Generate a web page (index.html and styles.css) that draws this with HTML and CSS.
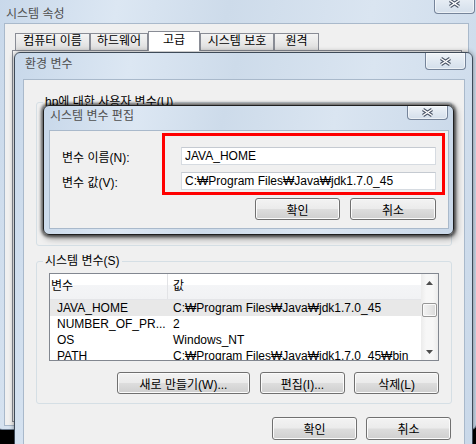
FILE: index.html
```html
<!DOCTYPE html>
<html lang="ko">
<head>
    <meta charset="UTF-8">
    <meta name="viewport" content="width=device-width, initial-scale=1.0">
    <title>시스템 속성</title>
    <link rel="stylesheet" href="styles.css">
</head>
<body>
<div class="desktop">

    <!-- 시스템 속성 -->
    <div class="window win-props">
        <div class="titlebar">
            <span class="title">시스템 속성</span>
            <span class="close-btn">
                <svg width="13" height="9" viewBox="0 0 13 9"><path d="M2 1.5L11 7.5M11 1.5L2 7.5" stroke="#4b5567" stroke-width="3.6"/><path d="M2 1.5L11 7.5M11 1.5L2 7.5" stroke="#fff" stroke-width="1.5"/></svg>
            </span>
        </div>
        <div class="client">
            <div class="tabs">
                <div class="tab tab-name">컴퓨터 이름</div>
                <div class="tab tab-hw">하드웨어</div>
                <div class="tab tab-adv selected">고급</div>
                <div class="tab tab-prot">시스템 보호</div>
                <div class="tab tab-remote">원격</div>
            </div>
            <div class="tab-page"></div>
        </div>
    </div>

    <!-- 환경 변수 -->
    <div class="window win-env">
        <div class="titlebar">
            <span class="title">환경 변수</span>
            <span class="close-btn">
                <svg width="13" height="9" viewBox="0 0 13 9"><path d="M2 1.5L11 7.5M11 1.5L2 7.5" stroke="#4b5567" stroke-width="3.6"/><path d="M2 1.5L11 7.5M11 1.5L2 7.5" stroke="#fff" stroke-width="1.5"/></svg>
            </span>
        </div>
        <div class="client">
            <fieldset class="group group-user">
                <legend>hp에 대한 사용자 변수(U)</legend>
            </fieldset>

            <fieldset class="group group-sys">
                <legend>시스템 변수(S)</legend>
                <div class="group-body">
                    <div class="listview">
                        <div class="lv-body">
                            <div class="lv-header">
                                <span>변수</span>
                                <span>값</span>
                            </div>
                            <div class="lv-row selected"><span>JAVA_HOME</span><span>C:₩Program Files₩Java₩jdk1.7.0_45</span></div>
                            <div class="lv-row"><span>NUMBER_OF_PR...</span><span>2</span></div>
                            <div class="lv-row"><span>OS</span><span>Windows_NT</span></div>
                            <div class="lv-row"><span>PATH</span><span>C:₩Program Files₩Java₩jdk1.7.0_45₩bin</span></div>
                        </div>
                        <div class="lv-scroll">
                            <div class="sb-arrow"><svg width="7" height="4" viewBox="0 0 7 4"><path d="M3.5 0L7 4H0z" fill="#4d4d4d"/></svg></div>
                            <div class="sb-thumb"></div>
                            <div class="sb-space"></div>
                            <div class="sb-arrow"><svg width="7" height="4" viewBox="0 0 7 4"><path d="M0 0H7L3.5 4z" fill="#4d4d4d"/></svg></div>
                        </div>
                    </div>
                    <div class="group-actions">
                        <div class="btn btn-new">새로 만들기(W)...</div>
                        <div class="btn">편집(I)...</div>
                        <div class="btn">삭제(L)</div>
                    </div>
                </div>
            </fieldset>

            <div class="dialog-buttons">
                <div class="btn btn-ok">확인</div>
                <div class="btn btn-ok">취소</div>
            </div>
        </div>
    </div>

    <!-- 시스템 변수 편집 -->
    <div class="window win-edit">
        <div class="titlebar">
            <span class="title">시스템 변수 편집</span>
            <span class="close-btn">
                <svg width="13" height="9" viewBox="0 0 13 9"><path d="M2 1.5L11 7.5M11 1.5L2 7.5" stroke="#4b5567" stroke-width="3.6"/><path d="M2 1.5L11 7.5M11 1.5L2 7.5" stroke="#fff" stroke-width="1.5"/></svg>
            </span>
        </div>
        <div class="client">
            <div class="edit-form">
                <label for="varName">변수 이름(N):</label>
                <input type="text" id="varName" value="JAVA_HOME" readonly>
                <label for="varValue">변수 값(V):</label>
                <input type="text" id="varValue" value="C:₩Program Files₩Java₩jdk1.7.0_45" readonly>
            </div>
            <div class="edit-buttons">
                <div class="btn">확인</div>
                <div class="btn btn-cancel">취소</div>
            </div>
            <div class="highlight"></div>
        </div>
    </div>

</div>
</body>
</html>
```

FILE: styles.css
```css
* {
    box-sizing: border-box;
}
body {
    margin: 0;
    background-color: #000;
    font-family: "Liberation Sans", "Noto Sans CJK KR", sans-serif;
    font-size: 12px;
    color: #000;
}
.desktop {
    position: relative;
    width: 476px;
    height: 444px;
    overflow: hidden;
}

/* window frame */
.window {
    position: absolute;
    display: flex;
    flex-direction: column;
    background: linear-gradient(100deg, #c8d8ea 0%, #dce7f3 22%, #cddbea 42%, #dae5f1 68%, #c9d8e9 100%);
    border: 1px solid #6b7b8f;
    border-radius: 6px;
}
.titlebar {
    display: flex;
    justify-content: space-between;
    align-items: flex-start;
    flex: none;
}
.title {
    color: #4f4f4f;
    line-height: 16px;
}
.close-btn {
    display: flex;
    align-items: center;
    justify-content: center;
    width: 41px;
    border: 1px solid #75849a;
    border-top: none;
    border-radius: 0 0 4px 4px;
    background: linear-gradient(#eef3f8, #d4dfeb);
    box-shadow: inset 0 0 0 1px rgba(255,255,255,0.55);
}
.client {
    flex: 1;
    background-color: #f0f0f0;
    border: 1px solid #a9b9cb;
}

/* 시스템 속성 */
.win-props {
    left: -4px;
    top: -7px;
    width: 481px;
    height: 437px;
}
.win-props .titlebar {
    height: 29px;
    padding-left: 9px;
}
.win-props .title {
    margin-top: 12px;
}
.win-props .close-btn {
    height: 20px;
    margin-right: 1px;
}
.win-props .client {
    margin: 0 7px 3px 7px;
}
.tabs {
    display: flex;
    align-items: flex-end;
    height: 26px;
    padding: 7px 0 0 10px;
}
.tab {
    position: relative;
    height: 17px;
    line-height: 15px;
    text-align: center;
    border: 1px solid #898c95;
    border-bottom: none;
    background: linear-gradient(#f4f4f4, #e9e9e9 50%, #dcdcdc);
}
.tab.selected {
    z-index: 1;
    height: 20px;
    margin-bottom: -1px;
    line-height: 17px;
    background: #fff;
}
.tab-name { width: 75px; }
.tab-hw { width: 58px; }
.tab-adv { width: 52px; }
.tab-prot { width: 74px; }
.tab-remote { width: 45px; }
.tab-page {
    height: 372px;
    margin: 0 6px 0 7px;
    border: 1px solid #898c95;
    background-color: #fbfbfb;
}

/* 환경 변수 */
.win-env {
    left: 14px;
    top: 52px;
    width: 459px;
    height: 420px;
    border-color: #3e4a58;
    border-radius: 6px 6px 0 0;
    box-shadow: 0 0 5px rgba(0,0,0,0.45);
}
.win-env .titlebar {
    height: 26px;
    padding-left: 10px;
}
.win-env .title {
    margin-top: 3px;
}
.win-env .close-btn {
    height: 17px;
    margin-right: 6px;
}
.win-env .client {
    margin: 0 7px 0 8px;
}
.group {
    margin: 0 12px;
    padding: 0;
    min-width: 0;
    border: 1px solid #d5dfe5;
    border-radius: 3px;
}
.group legend {
    margin-left: 6px;
    padding: 0 2px;
    line-height: 14px;
}
.group-user {
    height: 151px;
    margin-top: 15px;
}
.group-sys {
    height: 150px;
    margin-top: 8px;
}
.group-body {
    padding: 5px 12px 0 12px;
}
.listview {
    display: flex;
    height: 88px;
    border: 1px solid #828790;
    background-color: #fff;
}
.lv-body {
    flex: 1;
    min-width: 0;
    overflow: hidden;
}
.lv-header,
.lv-row {
    display: grid;
    grid-template-columns: 118px 1fr;
    white-space: nowrap;
}
.lv-header {
    height: 26px;
    background: linear-gradient(#fff 0%, #fff 42%, #f4f5f7 43%, #f1f2f4 100%);
    border-bottom: 1px solid #e4e5e8;
}
.lv-header span {
    line-height: 25px;
    padding-left: 1px;
}
.lv-header span:first-child {
    border-right: 1px solid #e2e3e6;
}
.lv-header span + span {
    padding-left: 5px;
}
.lv-row {
    height: 16px;
    line-height: 16px;
}
.lv-row span {
    overflow: hidden;
}
.lv-row span:first-child {
    padding-left: 7px;
}
.lv-row span + span {
    padding-left: 5px;
}
.lv-row.selected {
    background-color: #e8e8e8;
}
.lv-scroll {
    display: flex;
    flex-direction: column;
    align-items: center;
    width: 17px;
    flex: none;
    background: linear-gradient(to right, #ececec, #f7f7f7 30%, #f7f7f7 70%, #ececec);
}
.sb-arrow {
    display: flex;
    align-items: center;
    justify-content: center;
    width: 17px;
    height: 17px;
}
.sb-thumb {
    width: 15px;
    height: 14px;
    margin-top: 12px;
    border: 1px solid #979797;
    border-radius: 2px;
    background: linear-gradient(to right, #f3f3f3, #e8e8e8 50%, #d9d9d9);
    box-shadow: inset 0 0 0 1px #fafafa;
}
.sb-space {
    flex: 1;
}

/* buttons */
.btn {
    display: flex;
    align-items: center;
    justify-content: center;
    width: 85px;
    height: 22px;
    border: 1px solid #707070;
    border-radius: 3px;
    background: linear-gradient(#f3f3f3 0%, #ebebeb 48%, #dddddd 52%, #cfcfcf 100%);
    box-shadow: inset 0 0 0 1px #fbfbfb;
}
.group-actions {
    display: flex;
    justify-content: flex-end;
    gap: 9px;
    margin-top: 11px;
}
.btn-new {
    width: 133px;
    margin-right: 1px;
}
.dialog-buttons {
    display: flex;
    justify-content: flex-end;
    gap: 9px;
    margin-top: 13px;
    padding-right: 13px;
}
.btn-ok {
    height: 23px;
}

/* 시스템 변수 편집 */
.win-edit {
    left: 43px;
    top: 105px;
    width: 411px;
    height: 130px;
    border-color: #1f1f1f;
    box-shadow: 0 0 3px 2px rgba(0,0,0,0.55), 2px 3px 7px rgba(0,0,0,0.45);
}
.win-edit .titlebar {
    height: 24px;
    padding-left: 6px;
}
.win-edit .title {
    margin-top: 2px;
}
.win-edit .close-btn {
    height: 14px;
    margin-right: 5px;
}
.win-edit .client {
    position: relative;
    margin: 0 4px 5px 5px;
    padding: 16px 12px 0 12px;
}
.edit-form {
    display: grid;
    grid-template-columns: 119px 1fr;
    row-gap: 7px;
    align-items: center;
}
.edit-form input {
    height: 18px;
    margin: 0;
    padding: 0 3px;
    border: 1px solid #d6dbe1;
    border-top-color: #c5cad1;
    background-color: #fff;
    font: inherit;
    color: #000;
    outline: none;
}
.edit-buttons {
    display: flex;
    justify-content: flex-end;
    gap: 10px;
    margin-top: 8px;
}
.btn-cancel {
    width: 86px;
}
.highlight {
    position: absolute;
    left: 112px;
    top: 2px;
    width: 283px;
    height: 62px;
    border: 3px solid #f00;
}
```
